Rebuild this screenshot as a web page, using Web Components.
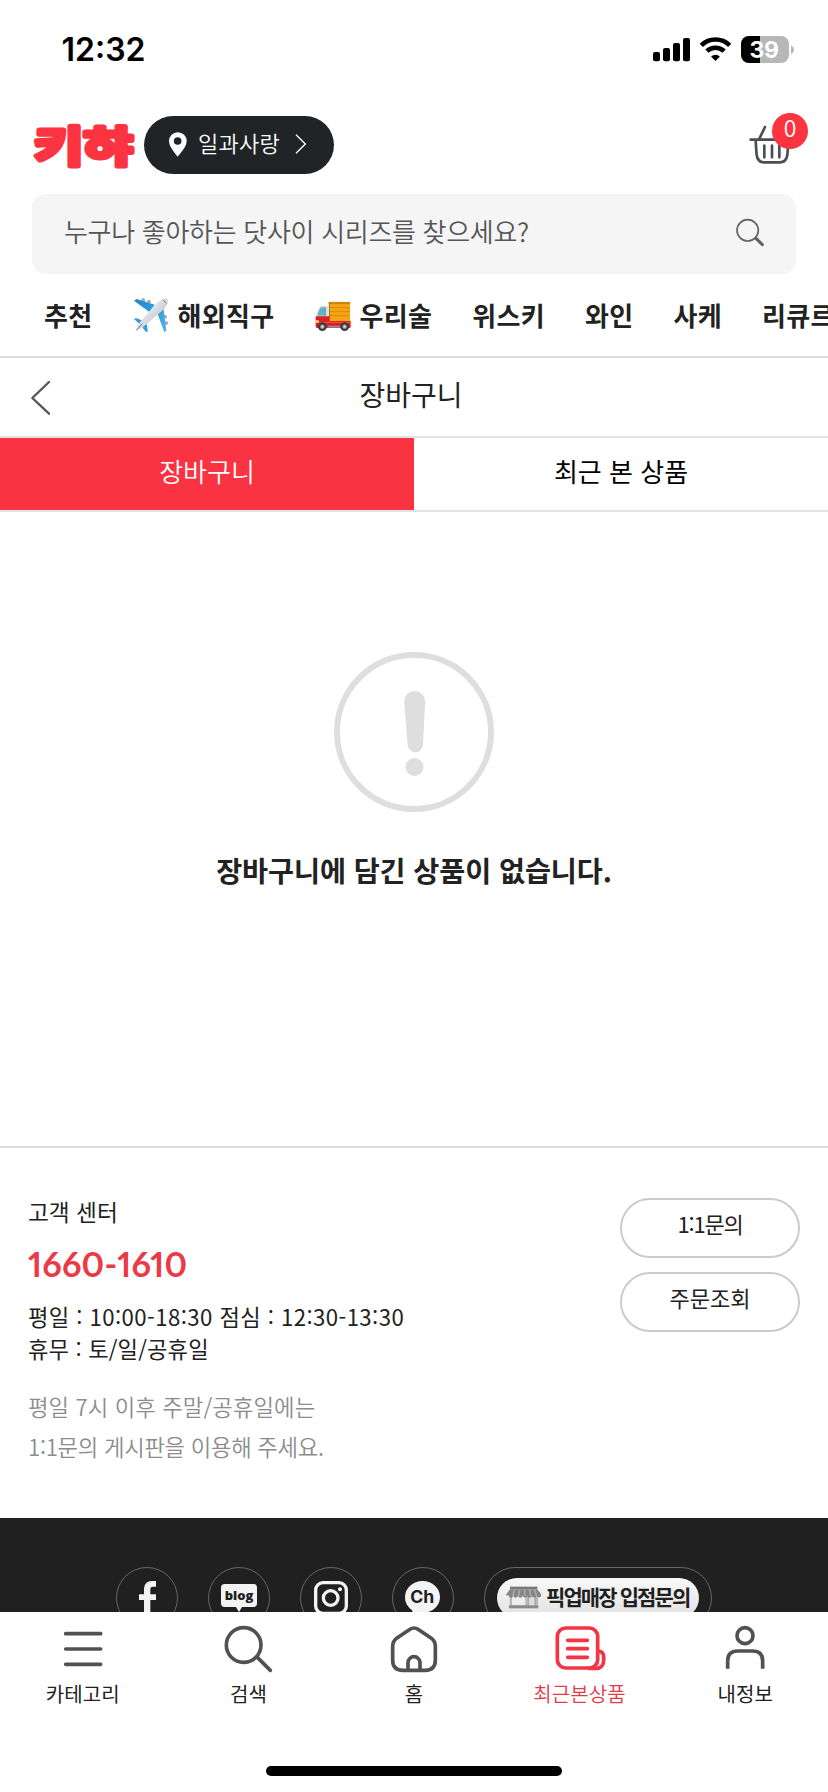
<!DOCTYPE html>
<html lang="ko">
<head>
<meta charset="utf-8">
<title>장바구니</title>
<style>
html,body{margin:0;padding:0;background:#fff}
body{width:828px;height:1792px;overflow:hidden;font-family:"Noto Sans CJK KR","Noto Sans",sans-serif;color:#222}
</style>
</head>
<body>
<cart-app></cart-app>
<script>
const define = (name, html) => {
  const t = document.createElement('template');
  t.innerHTML = html;
  customElements.define(name, class extends HTMLElement {
    constructor() {
      super();
      this.attachShadow({mode: 'open'}).append(t.content.cloneNode(true));
    }
  });
};

define('status-bar', `
<style>
:host{display:flex;align-items:center;justify-content:space-between;height:100px;padding:0 34px 0 61.500px;box-sizing:border-box;color:#000;font-family:Inter,sans-serif}
time{font-size:32px;font-weight:600;line-height:40px;letter-spacing:0}
svg{display:block}
</style>
<time>12:32</time>
<svg width="142" height="30" viewBox="652 35 142 30">
  <rect x="653" y="52" width="7" height="9.2" rx="2"/><rect x="663" y="48" width="7" height="13.2" rx="2"/><rect x="673" y="43" width="7" height="18.2" rx="2"/><rect x="683" y="38" width="7" height="23.2" rx="2"/>
  <g fill="none" stroke="#000" stroke-width="4.6"><path d="M701.3 45.3a20.3 20.3 0 0 1 28.4 0"/><path d="M706.9 51.2a12.3 12.3 0 0 1 17.2 0"/></g>
  <path d="M715.5 61l-4.4-4.5a6.5 6.5 0 0 1 8.8 0z"/>
  <clipPath id="b"><rect x="741" y="36" width="48" height="27" rx="8"/></clipPath>
  <g clip-path="url(#b)"><rect x="741" y="36" width="48" height="27" fill="#b7b7b7"/><rect x="741" y="36" width="19" height="27"/></g>
  <path d="M791 45.5c4 1.600 4 6.900 0 8.500z" fill="#b7b7b7"/>
  <text x="764" y="57.800" font-size="23" font-weight="700" fill="#fff" text-anchor="middle" letter-spacing="-.3">39</text>
</svg>`);

define('brand-logo', `
<style>
:host{display:block;width:99px;height:58px}
svg{display:block;overflow:visible}
text{font-family:"Noto Sans CJK KR",sans-serif;font-weight:700;font-size:42px;fill:#fc3341;stroke:#fc3341;stroke-width:4.800px;stroke-linejoin:round}
</style>
<svg width="99" height="58"><text x="0" y="46" textLength="99" lengthAdjust="spacingAndGlyphs">키햐</text></svg>`);

define('place-pill', `
<style>
:host{display:flex;align-items:center;width:190px;height:58px;border-radius:29px;background:#212427;color:#fff;font-size:22px;font-weight:350;box-sizing:border-box;padding-left:24px}
span{margin-left:10px;line-height:32px;position:relative;top:-3px;letter-spacing:.3px}
.c{margin-left:14px;position:relative;top:-1px}
</style>
<svg width="20" height="26" viewBox="504 394 60 78"><path fill="#fff" fill-rule="evenodd" d="M533 468C523 455 507 438 507 421a26.500 26.500 0 0 1 53 0c0 17-17 34-27 47zM533 432.500a11.500 11.500 0 1 0 0-23 11.500 11.500 0 0 0 0 23z"/></svg>
<span><slot></slot></span>
<svg class="c" width="13" height="22" viewBox="880 400 39 66"><path d="M886 405l28 28-28 28" fill="none" stroke="#fff" stroke-width="4"/></svg>`);

define('cart-button', `
<style>
:host{display:block;position:relative;width:60px;height:58px}
svg{display:block}
b{position:absolute;left:24px;top:-3px;width:36px;height:36px;border-radius:50%;background:#fb3440;color:#fff;font-weight:350;font-size:23px;line-height:28px;text-align:center}
</style>
<svg width="60" height="58" viewBox="1002 348 180 174" fill="none" stroke="#4b4e52" stroke-width="8" stroke-linecap="round" stroke-linejoin="round">
<path d="M1010 419H1138M1053 381l-18 37M1025 421c1 17 2 33 3 44 2 14 11 22 23 22h46c12 0 21-8 23-22 1-11 3-27 3-44M1051 437v35M1074 437v35M1096 437v35"/></svg>
<b><slot></slot></b>`);

define('search-box', `
<style>
:host{display:flex;align-items:center;justify-content:space-between;box-sizing:border-box;margin:20px 32px 0;height:80px;padding:0 31px 0 32px;border-radius:14px;background:#f5f5f5;color:#555;font-size:26px;font-weight:350}
span{line-height:38px;position:relative;top:-3px;letter-spacing:-.3px}
svg{position:relative;top:-1.500px}
</style>
<span><slot></slot></span>
<svg width="30" height="30" viewBox="963 113 90 90" fill="none" stroke="#626262" stroke-linecap="round"><circle cx="1001" cy="150" r="32" stroke-width="5"/><path d="M1026 174l19 19" stroke-width="9"/></svg>`);

define('category-bar', `
<style>
:host{display:flex;gap:40px;align-items:center;height:82px;padding:0 0 0 44px;overflow:hidden;white-space:nowrap;border-bottom:2px solid #dcdcdc;font-size:26px;font-weight:700;line-height:38px;letter-spacing:.33px}
::slotted(*){flex:none}
</style><slot></slot>`);

define('category-item', `
<style>:host{display:flex;align-items:center;gap:9px}</style>
<slot name="icon"></slot><slot></slot>`);

define('plane-icon', `
<style>:host{display:block;width:36px;height:36px}svg{display:block}</style>
<svg width="36" height="36" viewBox="399 355 108 108">
<defs><linearGradient id="w" x1="0" y1="0" x2="1" y2="1"><stop offset="0" stop-color="#1d87cf"/><stop offset="1" stop-color="#49b4ee"/></linearGradient>
<linearGradient id="f" x1="0" y1="0" x2="1" y2="1"><stop offset="0.200" stop-color="#f6f7fa"/><stop offset=".8" stop-color="#b9bec9"/></linearGradient></defs>
<g fill="#a9abb0"><rect x="424" y="358" width="11" height="14" rx="5"/><rect x="441" y="363" width="11" height="13" rx="5"/><rect x="487" y="409" width="14" height="11" rx="5"/><rect x="491" y="428" width="14" height="10" rx="5"/></g>
<path fill="url(#w)" d="M402 366l8-5 54 17-16 22zM499 457l-6 3-20-53 17-22z"/>
<path fill="#2f9be0" d="M401 420l9-1 20 8-9 11zM443 459l-2-21-8-4-5 13 10 13z"/>
<path fill="url(#f)" d="M503 360c3 12-3 23-15 35l-47 40c-9 8-21 16-34 21 5-13 12-25 20-34l41-47c11-12 22-18 35-15z"/>
<path d="M489 363l10 11M409 455l18-20" stroke="#747b87" stroke-width="3"/>
</svg>`);

define('truck-icon', `
<style>:host{display:block;width:36px;height:36px}svg{display:block}</style>
<svg width="36" height="36" viewBox="946 358 108 108">
<rect x="988" y="374" width="63" height="57" fill="#f5a514"/><path d="M988 374h63v4h-63zM988 390h63M988 402h63M988 414h63" stroke="#d2830a" stroke-width="2.500" fill="#b97812"/><path d="M989 374v57" stroke="#a36c17" stroke-width="3"/>
<path d="M962 384h26v48h-39c0-17 4-35 13-48z" fill="#d9e3e6"/><path d="M964 389h13v25h-24c2-10 5-18 11-25z" fill="#5fb3cd"/><path d="M977 389v25" stroke="#7b8b90" stroke-width="3"/>
<path d="M948 416h41v14h64v17c0 2-2 4-4 4h-96c-4 0-5-3-5-6z" fill="#dd1f1b"/><path d="M948 434h105" stroke="#f2574a" stroke-width="3"/><path d="M948 428h9v7h-9z" fill="#ffe9a0"/>
<path d="M984 447h38" stroke="#8d8d92" stroke-width="6"/>
<g fill="#3a3b3f"><circle cx="968" cy="447" r="13"/><circle cx="1035" cy="447" r="13"/></g><g fill="#c9cdd1" stroke="#77797e" stroke-width="2"><circle cx="968" cy="447" r="6"/><circle cx="1035" cy="447" r="6"/></g>
</svg>`);

define('page-title', `
<style>
:host{display:grid;grid-template-columns:80px 1fr 80px;align-items:center;height:78px;border-bottom:2px solid #e2e3e4;font-size:28px;font-weight:400;text-align:center}
svg{margin-left:30px;display:block;position:relative;top:1px}
span{line-height:40px;position:relative;top:-3px;left:-3px}
</style>
<svg width="22" height="36" viewBox="90 90 66 108"><path d="M147 96L97 144l50 47" fill="none" stroke="#555" stroke-width="7" stroke-linecap="round" stroke-linejoin="round"/></svg>
<span><slot></slot></span>`);

define('tab-row', `
<style>:host{display:grid;grid-template-columns:1fr 1fr;height:72px;border-bottom:2px solid #e2e3e4}</style><slot></slot>`);
define('tab-item', `
<style>
:host{display:block;text-align:center;font-size:26px;line-height:66px;color:#000}
:host([active]){background:#f93341;color:#fff;font-weight:350}
</style><slot></slot>`);

define('empty-state', `
<style>
:host{display:flex;flex-direction:column;align-items:center;height:636px;padding-top:140px;box-sizing:border-box;border-bottom:2px solid #dcdcdc}
p{margin:38px 0 0;font-size:28.300px;font-weight:700;line-height:40px;letter-spacing:-.1px;color:#222;white-space:nowrap}
</style>
<svg width="160" height="160" viewBox="0 0 160 160"><circle cx="80" cy="80" r="77" fill="none" stroke="#dedede" stroke-width="6"/><path fill="#dedede" d="M70.200 49.500a10.500 10.500 0 0 1 21 0L89 92.500a7.700 7.700 0 0 1-15.400 0z"/><circle cx="80.500" cy="115" r="9" fill="#dedede"/></svg>
<p><slot></slot></p>`);

define('pill-button', `
<style>
:host{display:block;box-sizing:border-box;width:180px;height:60px;border:2px solid #cbcbcb;border-radius:30px;text-align:center;font-size:22px;line-height:47px;color:#222}
:host([tight]){letter-spacing:-1.200px}
</style><slot></slot>`);

define('help-center', `
<style>
:host{display:flex;justify-content:space-between;align-items:flex-start;height:370px;padding:50px 28px 0;box-sizing:border-box;white-space:nowrap;color:#222}
h3,p{margin:0;font-weight:400}
h3{font-size:22.700px;line-height:32px;margin-top:-2px}
.n{font:700 34px/44px Lato,sans-serif;font-feature-settings:"pnum";letter-spacing:.2px;color:#eb3a47;margin-top:14px}
.h{font-size:22.200px;line-height:32px;margin-top:14px}
.h p:first-child{letter-spacing:.42px}
.h p+p{letter-spacing:.15px}
.g{font-size:22.300px;line-height:40px;margin-top:22px;color:#8c8c8c;letter-spacing:.08px}
.g p{font-weight:350}
.g p+p{letter-spacing:-.3px}
.a{display:grid;gap:14px}
</style>
<div><h3>고객 센터</h3><p class="n">1660-1610</p>
<div class="h"><p>평일 : 10:00-18:30 점심 : 12:30-13:30</p><p>휴무 : 토/일/공휴일</p></div>
<div class="g"><p>평일 7시 이후 주말/공휴일에는</p><p>1:1문의 게시판을 이용해 주세요.</p></div></div>
<div class="a"><pill-button tight>1:1문의</pill-button><pill-button>주문조회</pill-button></div>`);

define('social-footer', `
<style>
:host{display:flex;justify-content:center;align-items:flex-start;gap:30px;height:94px;padding-top:49px;box-sizing:border-box;background:#202020;overflow:hidden}
svg{display:block;flex:none}
.p{box-sizing:border-box;width:228px;height:62px;border:1px solid #666;border-radius:31px;padding:10px 12px}
.i{display:flex;align-items:center;box-sizing:border-box;height:40px;width:202px;border-radius:20px;background:linear-gradient(#f8f8f8,#e2e2e2);padding-left:9px;color:#202020;font-weight:700;font-size:21px;letter-spacing:-1.900px;line-height:30px;white-space:nowrap}
.i span{margin-left:5px;position:relative;top:-2px}
text{font-family:"Open Sans",sans-serif}
</style>
<svg width="62" height="62" viewBox="48 201 186 186"><circle cx="141" cy="294" r="91.500" fill="none" stroke="#666" stroke-width="3"/><path fill="#f3f3f3" d="M132 345v-45h-15v-17h15v-13c0-18 9-27 24-27h12v17h-9c-6 0-8 3-8 9v14h17v17h-17v45z"/></svg>
<svg width="62" height="62" viewBox="324 201 186 186"><circle cx="417" cy="294" r="91.500" fill="none" stroke="#666" stroke-width="3"/><path fill="#f3f3f3" d="M374 252h86a11 11 0 0 1 11 11v47a11 11 0 0 1-11 11h-34l-9 15-9-15h-34a11 11 0 0 1-11-11v-47a11 11 0 0 1 11-11z"/><text x="417" y="299" font-size="38" font-weight="800" text-anchor="middle" fill="#202020" textLength="86" lengthAdjust="spacingAndGlyphs">blog</text></svg>
<svg width="62" height="62" viewBox="600 201 186 186"><circle cx="693" cy="294" r="91.500" fill="none" stroke="#666" stroke-width="3"/><g fill="none" stroke="#f3f3f3"><rect x="647" y="248" width="92" height="92" rx="22" stroke-width="10"/><circle cx="692" cy="294" r="22" stroke-width="10"/></g><circle cx="720" cy="268" r="6" fill="#f3f3f3"/></svg>
<svg width="62" height="62" viewBox="876 201 186 186"><circle cx="969" cy="294" r="91.500" fill="none" stroke="#666" stroke-width="3"/><path fill="#f3f3f3" d="M968 243c29 0 52 21 52 48s-23 47-50 47c-8 4-18 9-35 10 3-5 4-11 1-18-13-8-21-23-21-39 0-27 24-48 53-48z"/><text x="967" y="309" font-size="50" font-weight="700" text-anchor="middle" fill="#202020" textLength="72" lengthAdjust="spacingAndGlyphs" style="font-family:Inter,sans-serif">Ch</text></svg>
<div class="p"><div class="i">
<svg width="35" height="24" viewBox="137 137 105 72"><path d="M148 160h85v36h-85z" fill="#b9b9b9"/><path d="M155 166h40v28h-40z" fill="#ededed"/><path d="M204 166h20v34h-20z" fill="#dcdcdc" stroke="#888" stroke-width="2"/><path d="M146 195h88v9h-88z" fill="#8a8a8a"/><path d="M149 139h82v8h-82z" fill="#777"/><path d="M149 147h82l12 16a7 7 0 0 1-14 2 7 7 0 0 1-14 0 7 7 0 0 1-14 0 7 7 0 0 1-14 0 7 7 0 0 1-14 0 7 7 0 0 1-14 0 7 7 0 0 1-14 0 7 7 0 0 1-8-2z" fill="#858585"/><path d="M163 147l-6 20M178 147l-3 20M193 147v20M208 147l3 20M222 147l7 20" stroke="#aaa" stroke-width="5"/></svg>
<span>픽업매장 입점문의</span></div></div>`);

define('nav-item', `
<style>
:host{display:flex;flex-direction:column;align-items:center;color:#222;--ink:#515151}
:host([active]){color:#e33b4b}
:host([active]) span{font-weight:350}
span{font-size:20px;line-height:30px;margin-top:5px;letter-spacing:.1px}
</style><slot name="icon"></slot><span><slot></slot></span>`);

define('bottom-nav', `
<style>
:host{display:flex;flex-direction:column;justify-content:space-between;align-items:center;height:180px;box-sizing:border-box;padding:12px 0 16px;background:#fff}
nav{display:grid;grid-template-columns:repeat(5,1fr);width:100%}
svg{display:block;width:50px;height:50px;overflow:visible;fill:none;stroke:var(--ink);stroke-width:11;stroke-linecap:round;stroke-linejoin:round}
.bar{width:296px;height:10px;border-radius:5px;background:#000}
nav-item[active] svg{--ink:#f33442}
</style>
<nav>
<nav-item><svg slot="icon" viewBox="174 72 150 150"><path d="M197 101H302M197 147H302M197 193H302"/></svg>카테고리</nav-item>
<nav-item><svg slot="icon" viewBox="670 72 150 150"><circle cx="732" cy="135" r="52"/><path d="M773 172l39 39"/></svg>검색</nav-item>
<nav-item><svg slot="icon" viewBox="1167 72 150 150"><path d="M1230 88q12-8 24 0l39 26q13 9 13 25v42q0 30-30 30h-68q-30 0-30-30v-42q0-16 13-25zM1224 209v-21a18 18 0 0 1 36 0v21"/></svg>홈</nav-item>
<nav-item active><svg slot="icon" viewBox="284 252 150 150"><rect x="291" y="264" width="121" height="120" rx="25"/><path d="M322 301H381M322 326H381M322 352H381M414 333c11 1 16 8 16 18v10c0 15-8 24-22 24h-22"/></svg>최근본상품</nav-item>
<nav-item><svg slot="icon" viewBox="780 252 150 150"><circle cx="855" cy="287" r="24"/><path d="M803 386v-23q0-30 30-30h45q30 0 30 30v23" stroke-linecap="butt"/></svg>내정보</nav-item>
</nav>
<div class="bar"></div>`);

define('cart-app', `
<style>
:host{display:block;width:828px;height:1792px;background:#fff}
header{display:flex;align-items:center;height:58px;padding:16px 20px 0 34px}
place-pill{margin-left:11px}
cart-button{margin-left:auto}
</style>
<status-bar></status-bar>
<header><brand-logo></brand-logo><place-pill>일과사랑</place-pill><cart-button>0</cart-button></header>
<search-box>누구나 좋아하는 닷사이 시리즈를 찾으세요?</search-box>
<category-bar>
<category-item>추천</category-item>
<category-item><plane-icon slot="icon"></plane-icon>해외직구</category-item>
<category-item><truck-icon slot="icon"></truck-icon>우리술</category-item>
<category-item>위스키</category-item><category-item>와인</category-item><category-item>사케</category-item><category-item>리큐르</category-item>
</category-bar>
<page-title>장바구니</page-title>
<tab-row><tab-item active>장바구니</tab-item><tab-item>최근 본 상품</tab-item></tab-row>
<empty-state>장바구니에 담긴 상품이 없습니다.</empty-state>
<help-center></help-center>
<social-footer></social-footer>
<bottom-nav></bottom-nav>`);
</script>
</body>
</html>
